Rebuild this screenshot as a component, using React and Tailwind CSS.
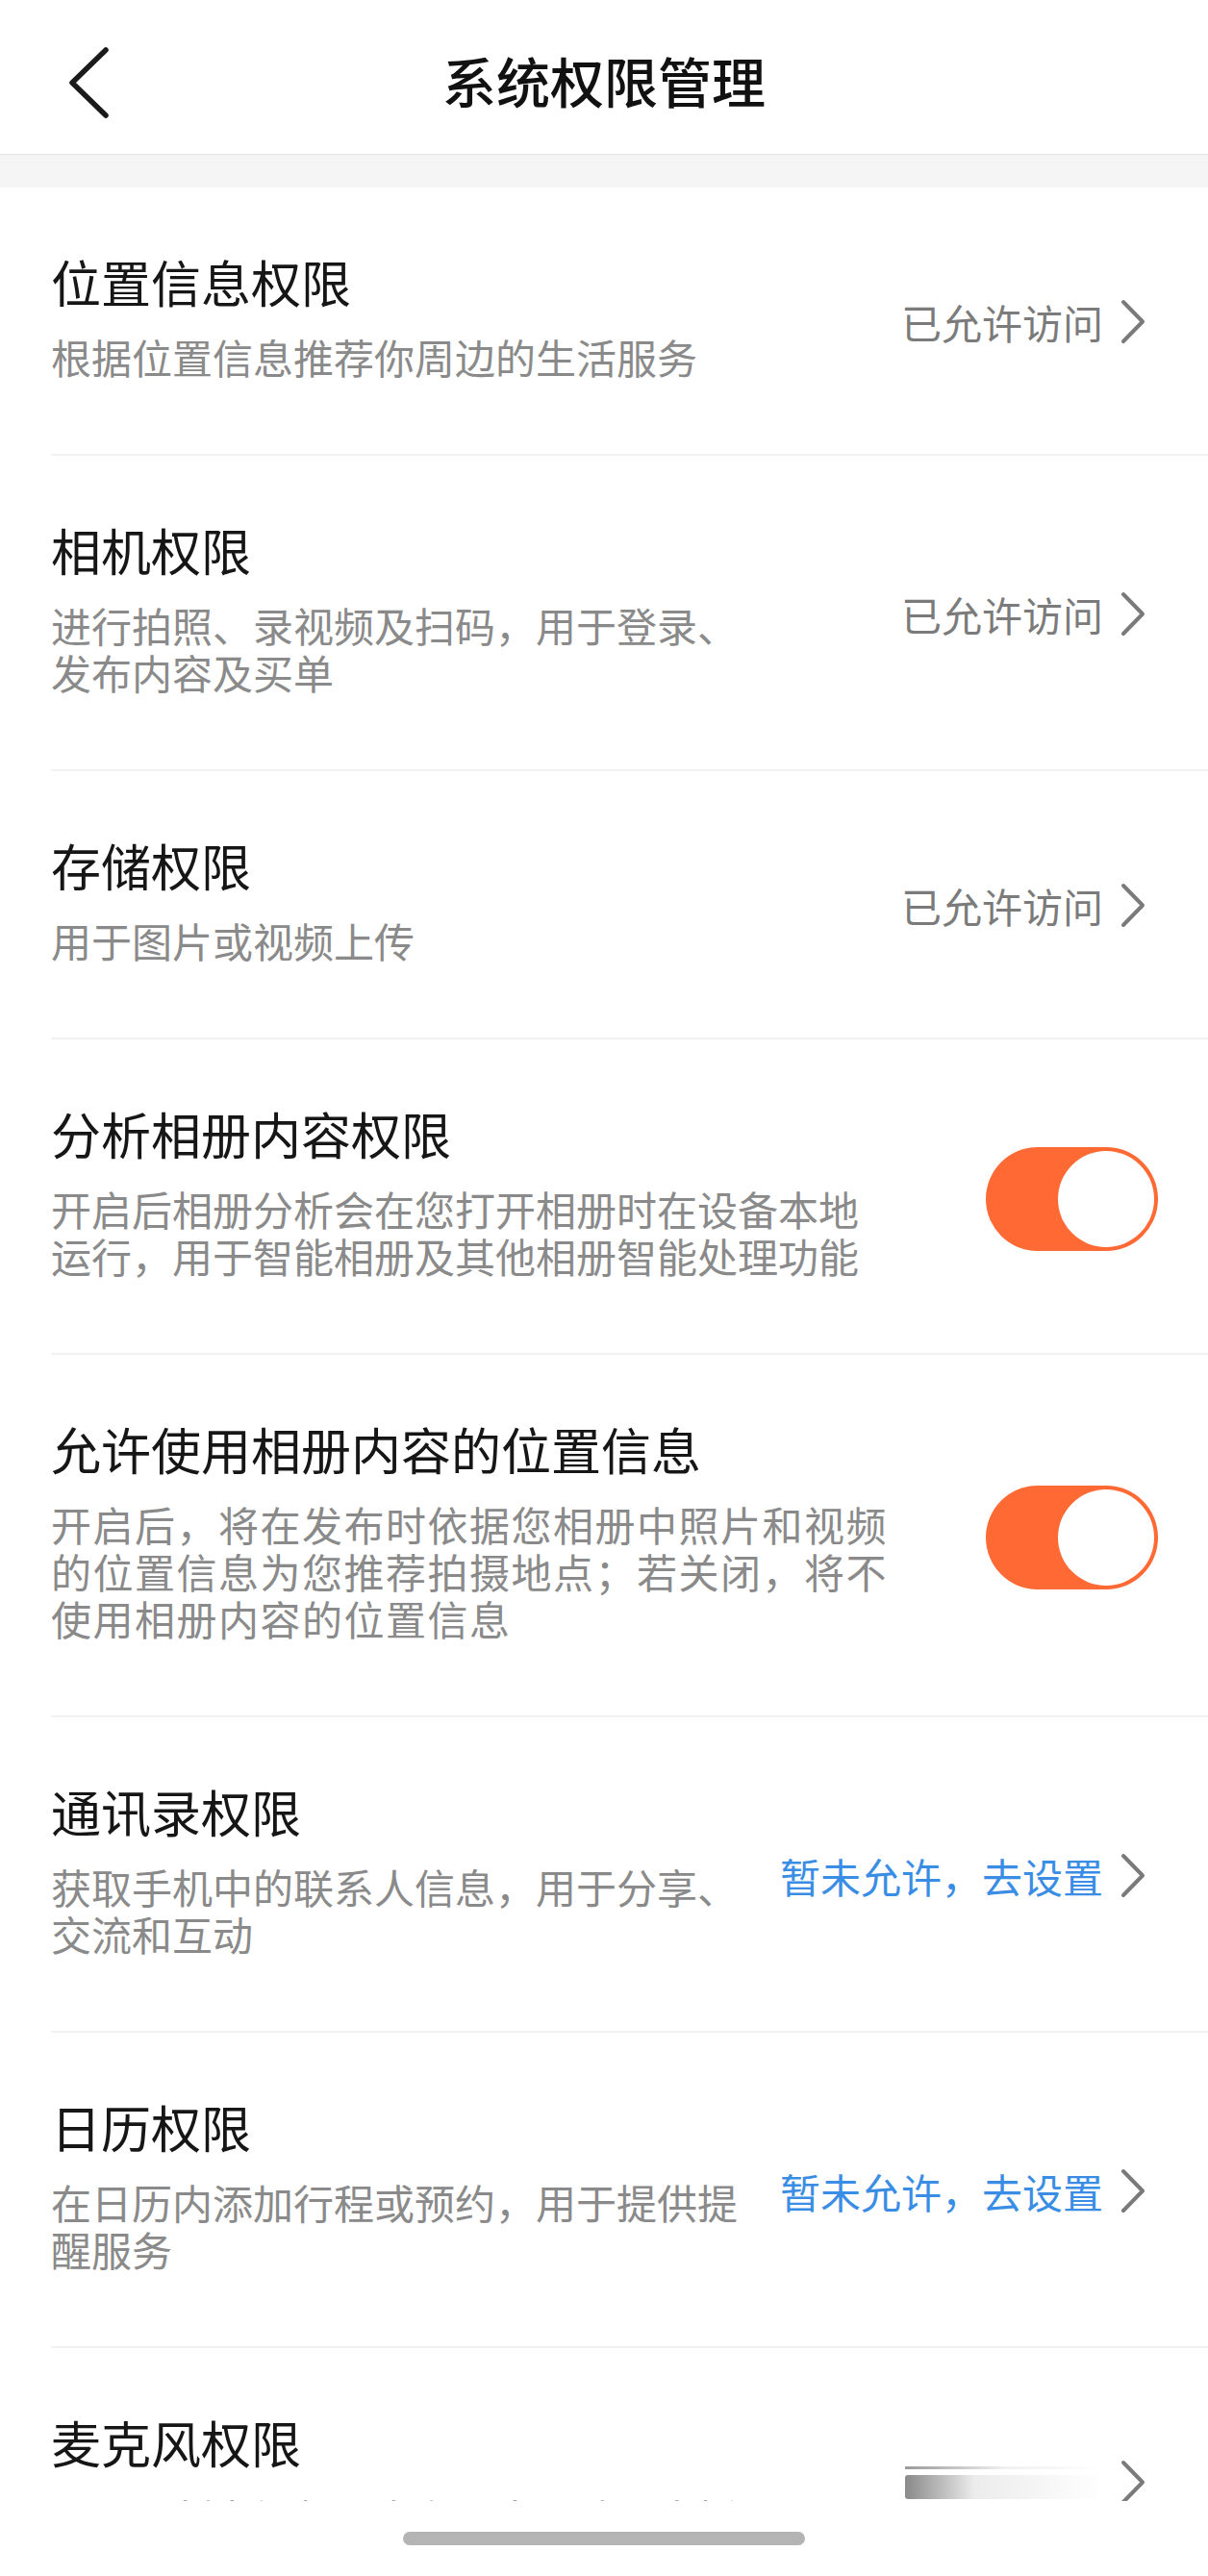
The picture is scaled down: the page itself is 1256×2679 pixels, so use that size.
import React from "react";

const rows = [
  {
    title: "位置信息权限",
    desc: ["根据位置信息推荐你周边的生活服务"],
    right: "allowed",
  },
  {
    title: "相机权限",
    desc: ["进行拍照、录视频及扫码，用于登录、", "发布内容及买单"],
    right: "allowed",
  },
  {
    title: "存储权限",
    desc: ["用于图片或视频上传"],
    right: "allowed",
  },
  {
    title: "分析相册内容权限",
    desc: [
      "开启后相册分析会在您打开相册时在设备本地",
      "运行，用于智能相册及其他相册智能处理功能",
    ],
    right: "toggle",
  },
  {
    title: "允许使用相册内容的位置信息",
    desc: [
      "开启后，将在发布时依据您相册中照片和视频",
      "的位置信息为您推荐拍摄地点；若关闭，将不",
      "使用相册内容的位置信息",
    ],
    right: "toggle",
    wide: true,
  },
  {
    title: "通讯录权限",
    desc: ["获取手机中的联系人信息，用于分享、", "交流和互动"],
    right: "denied",
  },
  {
    title: "日历权限",
    desc: ["在日历内添加行程或预约，用于提供提", "醒服务"],
    right: "denied",
  },
  {
    title: "麦克风权限",
    desc: ["用于录制音视频、发布语音评论及直播"],
    right: "blurred",
  },
];

const Chevron = () => (
  <svg width="28" height="49" viewBox="0 0 28 49" className="ml-[17px] shrink-0">
    <path
      d="M4 4 L24 24.5 L4 45"
      fill="none"
      stroke="#7a7a7a"
      strokeWidth="4"
      strokeLinecap="round"
      strokeLinejoin="round"
    />
  </svg>
);

const Toggle = () => (
  <div className="mt-[15px] flex h-[108px] w-[179px] shrink-0 items-center justify-end rounded-full bg-[#fe6934] pr-[4px]">
    <div className="h-[100px] w-[100px] rounded-full bg-white" />
  </div>
);

const RightSide = ({ kind }) => {
  if (kind === "toggle") return <Toggle />;
  if (kind === "allowed")
    return (
      <div className="mt-[12px] flex items-center">
        <span className="text-[42px] leading-[49px] text-[#7b7b7b]">已允许访问</span>
        <Chevron />
      </div>
    );
  if (kind === "denied")
    return (
      <div className="mt-[12px] flex items-center">
        <span className="text-[42px] leading-[49px] text-[#3a8de4]">暂未允许，去设置</span>
        <Chevron />
      </div>
    );
  return (
    <div className="mt-[12px] flex items-center">
      <div className="flex w-[206px] flex-col gap-[6px]">
        <div className="h-[3px] w-full bg-linear-to-r from-[#9a9a9a] via-[#f0f0f0] to-white" />
        <div className="h-[25px] w-full rounded-l-[3px] bg-linear-to-r from-[#8a8a8a] via-[#ececec] via-35% to-white" />
      </div>
      <Chevron />
    </div>
  );
};

const Row = ({ row }) => (
  <div
    className={
      "ml-[53px] flex items-center justify-between border-b-2 border-[#f1f1f1] pt-[67px] pb-[77px] " +
      (row.right === "toggle" ? "pr-[52px]" : "pr-[64px]")
    }
  >
    <div className="flex flex-col">
      <div className="text-[52px] leading-[62px] text-[#161616]">{row.title}</div>
      <div
        className={
          "mt-[22px] text-[42px] leading-[49px] text-[#8a8a8a] " +
          (row.wide ? "tracking-[1.5px]" : "")
        }
      >
        {row.desc.map((line) => (
          <div key={line} className="whitespace-nowrap">
            {line}
          </div>
        ))}
      </div>
    </div>
    <RightSide kind={row.right} />
  </div>
);

export default function App() {
  return (
    <div
      className="relative h-[2679px] w-[1256px] overflow-hidden bg-white"
      style={{ fontFamily: '"Noto Sans CJK SC", "Noto Sans", sans-serif' }}
    >
      <header className="relative flex h-[161px] items-center justify-center border-b border-[#e4e4e4] bg-white">
        <button className="absolute left-[68px] top-[48px]">
          <svg width="48" height="76" viewBox="0 0 48 76">
            <path
              d="M42 4 L7 38 L42 72"
              fill="none"
              stroke="#1a1a1a"
              strokeWidth="5.5"
              strokeLinecap="round"
              strokeLinejoin="round"
            />
          </svg>
        </button>
        <h1 className="mt-[6px] text-[56px] font-medium leading-[66px] text-[#111]">系统权限管理</h1>
      </header>
      <div className="h-[34px] bg-[#f5f5f5]" />
      <div className="flex flex-col">
        {rows.map((row) => (
          <Row key={row.title} row={row} />
        ))}
      </div>
      <div className="absolute bottom-0 left-0 flex h-[78px] w-full justify-center bg-white pt-[32px]">
        <div className="h-[14px] w-[418px] rounded-full bg-[#b4b4b4]" />
      </div>
    </div>
  );
}
